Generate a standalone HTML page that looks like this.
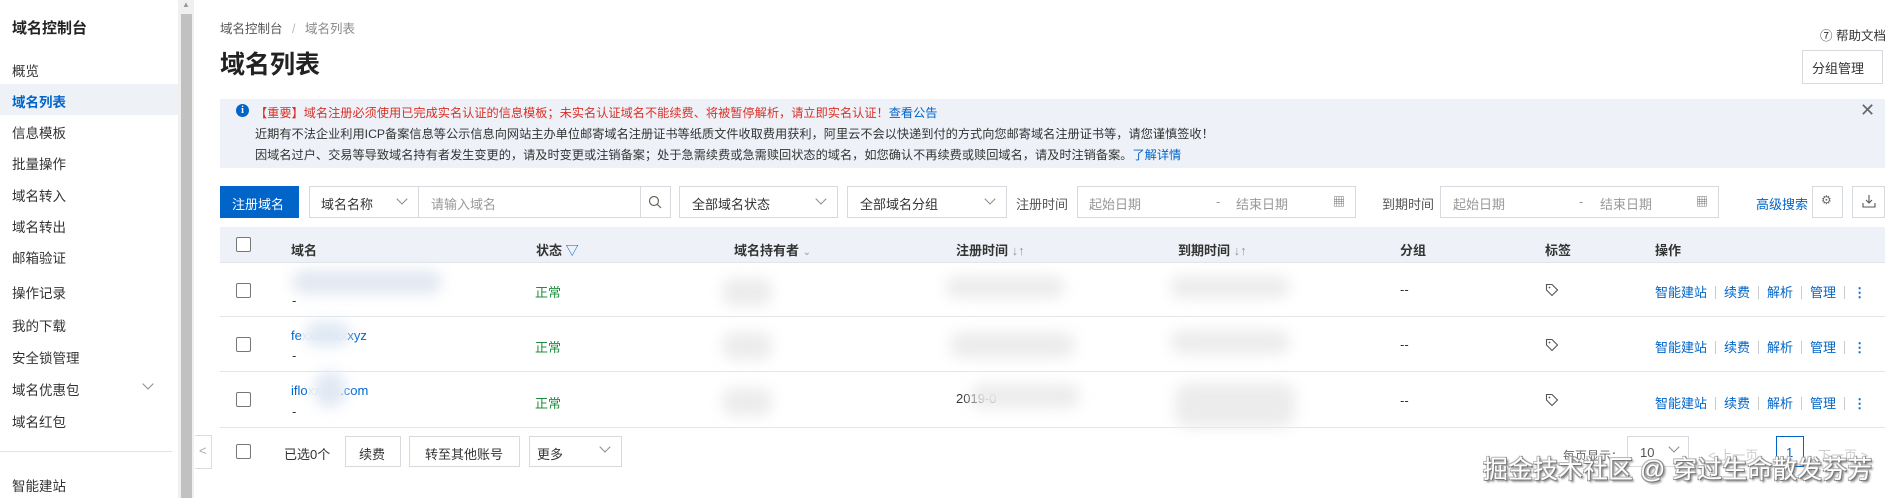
<!DOCTYPE html>
<html><head><meta charset="utf-8">
<style>
*{margin:0;padding:0;box-sizing:border-box}
body{width:1885px;height:498px;overflow:hidden;background:#fff;font-family:"Liberation Sans","Noto Sans CJK SC",sans-serif;color:#333;font-size:13px;position:relative}
.a{position:absolute;white-space:nowrap}
.side .a{left:12px;font-size:13.5px;color:#333}
.box{position:absolute;border:1px solid #d6d9de;background:#fff}
.blue{color:#0064c8}
.ph{color:#999}
.blur{position:absolute;background:#ececec;border-radius:12px;filter:blur(7px)}
.cb{position:absolute;width:15px;height:15px;border:1px solid #777;border-radius:2px;background:#fff}
.chev{position:absolute;width:8px;height:8px;border-right:1px solid #888;border-bottom:1px solid #888;transform:rotate(45deg)}
.hd{position:absolute;top:240px;font-weight:bold;font-size:13px;color:#333}
.ops{position:absolute;font-size:13px;color:#0064c8}
.ops span{display:inline-block;width:1px;height:13px;background:#ccc;margin:0 8px;vertical-align:-2px}
.hl{position:absolute;left:220px;right:0;height:1px;background:#e3e5e8}
.nt{font-size:12.2px}
</style></head><body>
<div class="side">
<div class="a" style="left:12px;top:17px;font-size:15px;font-weight:bold;color:#222">域名控制台</div>
<div style="position:absolute;left:0;top:84px;width:178px;height:31px;background:#eef1f6"></div>
<div class="a" style="top:60px">概览</div>
<div class="a" style="top:91px;color:#0064c8;font-weight:bold">域名列表</div>
<div class="a" style="top:122px">信息模板</div>
<div class="a" style="top:153px">批量操作</div>
<div class="a" style="top:185px">域名转入</div>
<div class="a" style="top:216px">域名转出</div>
<div class="a" style="top:247px">邮箱验证</div>
<div class="a" style="top:282px">操作记录</div>
<div class="a" style="top:315px">我的下载</div>
<div class="a" style="top:347px">安全锁管理</div>
<div class="a" style="top:379px">域名优惠包</div>
<div class="chev" style="left:144px;top:380px"></div>
<div class="a" style="top:411px">域名红包</div>
<div style="position:absolute;left:0;top:451px;width:172px;height:1px;background:#e3e3e3"></div>
<div class="a" style="top:475px">智能建站</div>
</div>
<div style="position:absolute;left:178px;top:0;width:16px;height:498px;background:#f0f0f0"></div>
<div style="position:absolute;left:181px;top:14px;width:11px;height:484px;background:#c1c1c1"></div>
<div class="a" style="left:182px;top:0;font-size:8px;color:#999">▲</div>
<div style="position:absolute;left:195px;top:435px;width:17px;height:34px;border:1px solid #ddd;background:#fff;border-left:none"></div>
<div class="a" style="left:199px;top:443px;color:#aaa;font-size:13px">&lt;</div>
<div class="a" style="left:220px;top:18px;font-size:12.5px;color:#555">域名控制台 <span style="color:#bbb;margin:0 6px">/</span> <span style="color:#888">域名列表</span></div>
<div class="a" style="left:220px;top:45px;font-size:25px;font-weight:bold;color:#222">域名列表</div>
<div class="a" style="left:1820px;top:25px;font-size:12.5px;color:#333">⑦ 帮助文档</div>
<div class="box" style="left:1802px;top:50px;width:81px;height:34px"></div>
<div class="a" style="left:1812px;top:58px;font-size:13px">分组管理</div>
<div style="position:absolute;left:220px;top:99px;width:1665px;height:69px;background:#eef2f8"></div>
<div style="position:absolute;left:236px;top:104px;width:13px;height:13px;border-radius:50%;background:#0064c8;color:#fff;font-size:10px;font-weight:bold;text-align:center;line-height:13px;font-family:'Liberation Serif',serif">i</div>
<div class="a nt" style="left:255px;top:103px;color:#d93026">【重要】域名注册必须使用已完成实名认证的信息模板；未实名认证域名不能续费、将被暂停解析，请立即实名认证！<span class="blue">查看公告</span></div>
<div class="a nt" style="left:255px;top:124px;color:#333">近期有不法企业利用ICP备案信息等公示信息向网站主办单位邮寄域名注册证书等纸质文件收取费用获利，阿里云不会以快递到付的方式向您邮寄域名注册证书等，请您谨慎签收！</div>
<div class="a nt" style="left:255px;top:145px;color:#333">因域名过户、交易等导致域名持有者发生变更的，请及时变更或注销备案；处于急需续费或急需赎回状态的域名，如您确认不再续费或赎回域名，请及时注销备案。<span class="blue">了解详情</span></div>
<div class="a" style="left:1860px;top:100px;font-size:18px;color:#666">✕</div>
<div style="position:absolute;left:220px;top:186px;width:79px;height:32px;background:#0064c8"></div>
<div class="a" style="left:232px;top:194px;color:#fff;font-size:13px">注册域名</div>
<div class="box" style="left:309px;top:186px;width:362px;height:32px"></div>
<div style="position:absolute;left:418px;top:186px;width:1px;height:32px;background:#d6d9de"></div>
<div style="position:absolute;left:640px;top:186px;width:1px;height:32px;background:#d6d9de"></div>
<div class="a" style="left:321px;top:194px">域名名称</div>
<div class="chev" style="left:398px;top:195px"></div>
<div class="a ph" style="left:431px;top:194px">请输入域名</div>
<svg class="a" style="left:648px;top:195px" width="14" height="14" viewBox="0 0 14 14"><circle cx="6" cy="6" r="4.5" fill="none" stroke="#666" stroke-width="1.2"/><line x1="9.3" y1="9.3" x2="13" y2="13" stroke="#666" stroke-width="1.2"/></svg>
<div class="box" style="left:679px;top:186px;width:159px;height:32px"></div>
<div class="a" style="left:692px;top:194px">全部域名状态</div>
<div class="chev" style="left:817px;top:195px"></div>
<div class="box" style="left:847px;top:186px;width:160px;height:32px"></div>
<div class="a" style="left:860px;top:194px">全部域名分组</div>
<div class="chev" style="left:986px;top:195px"></div>
<div class="a" style="left:1016px;top:194px;color:#555">注册时间</div>
<div class="box" style="left:1077px;top:186px;width:279px;height:32px"></div>
<div class="a ph" style="left:1089px;top:194px">起始日期</div>
<div class="a ph" style="left:1216px;top:194px">-</div>
<div class="a ph" style="left:1236px;top:194px">结束日期</div>
<div class="a" style="left:1333px;top:193px;font-size:12px;color:#666">▦</div>
<div class="a" style="left:1382px;top:194px;color:#555">到期时间</div>
<div class="box" style="left:1440px;top:186px;width:279px;height:32px"></div>
<div class="a ph" style="left:1453px;top:194px">起始日期</div>
<div class="a ph" style="left:1579px;top:194px">-</div>
<div class="a ph" style="left:1600px;top:194px">结束日期</div>
<div class="a" style="left:1696px;top:193px;font-size:12px;color:#666">▦</div>
<div class="a blue" style="left:1756px;top:194px">高级搜索</div>
<div class="box" style="left:1812px;top:186px;width:31px;height:32px"></div>
<div class="a" style="left:1821px;top:193px;font-size:12px;color:#666">⚙</div>
<div class="box" style="left:1852px;top:186px;width:33px;height:32px"></div>
<svg class="a" style="left:1862px;top:194px" width="14" height="14" viewBox="0 0 14 14"><path d="M7 1v8M4 6l3 3 3-3M1 9v4h12V9" fill="none" stroke="#555" stroke-width="1.1"/></svg>
<div style="position:absolute;left:220px;top:227px;width:1665px;height:35px;background:#eef2f8"></div>
<div class="hl" style="top:262px"></div>
<div class="cb" style="left:236px;top:237px"></div>
<div class="hd" style="left:291px">域名</div>
<div class="hd" style="left:536px">状态 <span style="color:#0064c8;font-weight:normal">▽</span></div>
<div class="hd" style="left:734px">域名持有者 <span style="color:#999;font-weight:normal;font-size:10px">⌄</span></div>
<div class="hd" style="left:956px">注册时间 <span style="color:#999;font-weight:normal">↓↑</span></div>
<div class="hd" style="left:1178px">到期时间 <span style="color:#999;font-weight:normal">↓↑</span></div>
<div class="hd" style="left:1400px">分组</div>
<div class="hd" style="left:1545px">标签</div>
<div class="hd" style="left:1655px">操作</div>
<div class="hl" style="top:316px"></div>
<div class="hl" style="top:371px"></div>
<div class="hl" style="top:427px"></div>

<div class="cb" style="left:236px;top:283px"></div>
<div class="blur" style="left:292px;top:270px;width:150px;height:24px;background:#e2e8f2"></div>
<div class="a" style="left:292px;top:293px">-</div>
<div class="a" style="left:535px;top:282px;color:#1e8e3e">正常</div>
<div class="blur" style="left:722px;top:278px;width:50px;height:28px"></div>
<div class="blur" style="left:945px;top:276px;width:120px;height:22px"></div>
<div class="blur" style="left:1170px;top:276px;width:120px;height:22px"></div>
<div class="a" style="left:1400px;top:282px">--</div>

<div class="cb" style="left:236px;top:337px"></div>
<div class="a blue" style="left:291px;top:328px">fe<span style="color:#dde6f2">xxxxxxx</span>xyz</div>
<div class="blur" style="left:305px;top:322px;width:45px;height:24px;background:#dfe8f3"></div>
<div class="a" style="left:292px;top:348px">-</div>
<div class="a" style="left:535px;top:337px;color:#1e8e3e">正常</div>
<div class="blur" style="left:722px;top:332px;width:50px;height:28px"></div>
<div class="blur" style="left:950px;top:332px;width:125px;height:26px"></div>
<div class="blur" style="left:1170px;top:330px;width:120px;height:24px"></div>
<div class="a" style="left:1400px;top:337px">--</div>

<div class="cb" style="left:236px;top:392px"></div>
<div class="a blue" style="left:291px;top:383px">iflo<span style="color:#dde6f2">xxxxx</span>.com</div>
<div class="blur" style="left:315px;top:372px;width:30px;height:35px;background:#dfe8f3"></div>
<div class="a" style="left:292px;top:404px">-</div>
<div class="a" style="left:535px;top:393px;color:#1e8e3e">正常</div>
<div class="blur" style="left:722px;top:388px;width:50px;height:28px"></div>
<div class="a" style="left:956px;top:391px">2019-0</div>
<div class="blur" style="left:970px;top:384px;width:110px;height:24px"></div>
<div class="blur" style="left:1175px;top:383px;width:120px;height:44px"></div>
<div class="a" style="left:1400px;top:393px">--</div>

<svg class="a" style="left:1545px;top:283px" width="14" height="14" viewBox="0 0 14 14"><path d="M1.5 1.5h5.5l5.5 5.5-5.5 5.5-5.5-5.5z" fill="none" stroke="#555" stroke-width="1.1"/><circle cx="4.5" cy="4.5" r="0.9" fill="#555"/></svg>
<svg class="a" style="left:1545px;top:338px" width="14" height="14" viewBox="0 0 14 14"><path d="M1.5 1.5h5.5l5.5 5.5-5.5 5.5-5.5-5.5z" fill="none" stroke="#555" stroke-width="1.1"/><circle cx="4.5" cy="4.5" r="0.9" fill="#555"/></svg>
<svg class="a" style="left:1545px;top:393px" width="14" height="14" viewBox="0 0 14 14"><path d="M1.5 1.5h5.5l5.5 5.5-5.5 5.5-5.5-5.5z" fill="none" stroke="#555" stroke-width="1.1"/><circle cx="4.5" cy="4.5" r="0.9" fill="#555"/></svg>
<div class="ops a" style="left:1655px;top:282px">智能建站<span></span>续费<span></span>解析<span></span>管理<span></span><b>⋮</b></div>
<div class="ops a" style="left:1655px;top:337px">智能建站<span></span>续费<span></span>解析<span></span>管理<span></span><b>⋮</b></div>
<div class="ops a" style="left:1655px;top:393px">智能建站<span></span>续费<span></span>解析<span></span>管理<span></span><b>⋮</b></div>
<div class="cb" style="left:236px;top:444px"></div>
<div class="a" style="left:284px;top:444px">已选0个</div>
<div class="box" style="left:345px;top:436px;width:56px;height:31px"></div>
<div class="a" style="left:359px;top:444px">续费</div>
<div class="box" style="left:409px;top:436px;width:111px;height:31px"></div>
<div class="a" style="left:425px;top:444px">转至其他账号</div>
<div class="box" style="left:529px;top:436px;width:93px;height:31px"></div>
<div class="a" style="left:537px;top:444px">更多</div>
<div class="chev" style="left:601px;top:443px"></div>
<div class="a" style="left:1563px;top:447px;color:#666;font-size:12px">每页显示：</div>
<div class="box" style="left:1627px;top:436px;width:62px;height:31px"></div>
<div class="a" style="left:1640px;top:445px;color:#555">10</div>
<div class="chev" style="left:1670px;top:443px"></div>
<div class="a" style="left:1708px;top:445px;color:#ccc">&lt; 上一页</div>
<div style="position:absolute;left:1776px;top:436px;width:28px;height:31px;border:1px solid #0064c8"></div>
<div class="a blue" style="left:1786px;top:445px">1</div>
<div class="a" style="left:1818px;top:445px;color:#ccc">下一页 &gt;</div>
<div class="a" style="left:1483px;top:450px;font-size:25px;color:#fff;text-shadow:1px 1px 0 #777,-1px -1px 0 #bbb,1px -1px 0 #999,-1px 1px 0 #999,2px 2px 2px #666">掘金技术社区 @ 穿过生命散发芬芳</div>
</body></html>
